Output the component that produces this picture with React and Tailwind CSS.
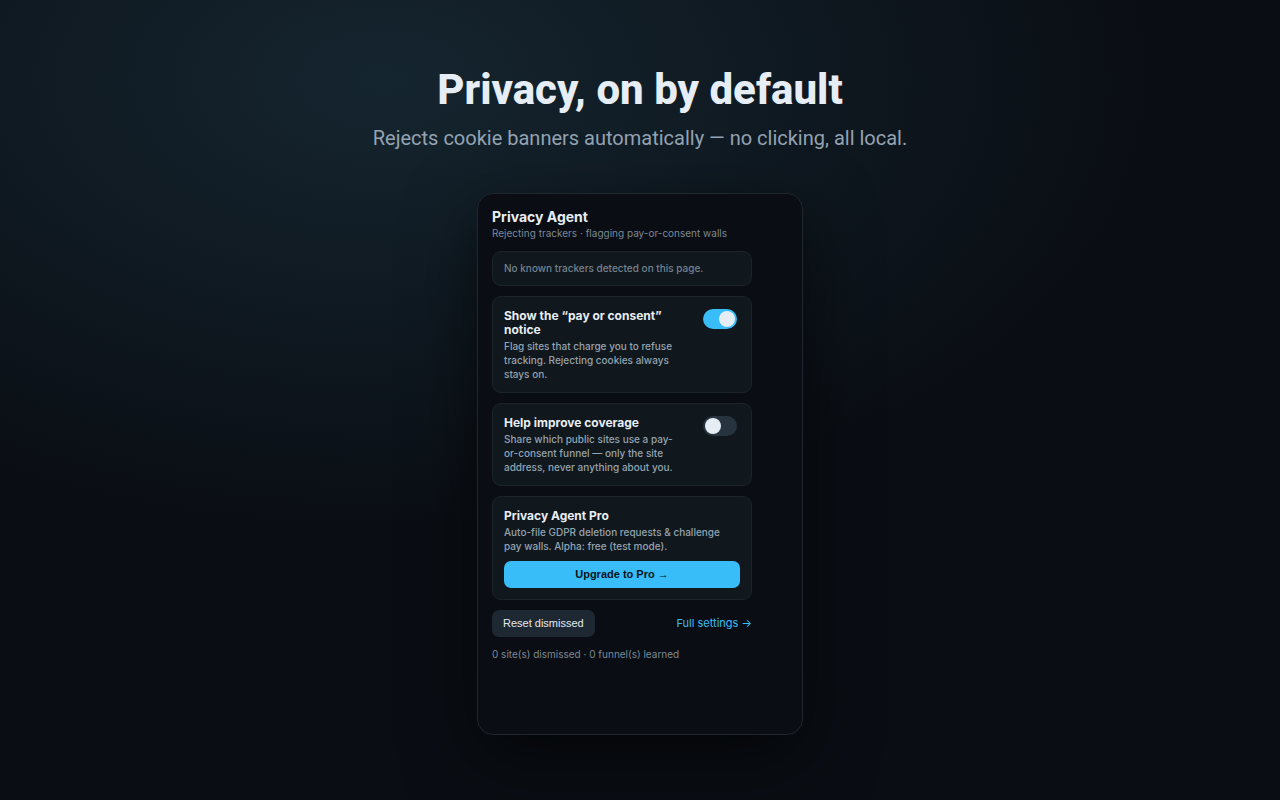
import React, { useState } from "react";

const toggles = [
  {
    id: "pay-notice",
    title: "Show the “pay or consent” notice",
    text: "Flag sites that charge you to refuse tracking. Rejecting cookies always stays on.",
    on: true,
  },
  {
    id: "coverage",
    title: "Help improve coverage",
    text: "Share which public sites use a pay-or-consent funnel — only the site address, never anything about you.",
    on: false,
  },
];

const Card = ({ children }) => (
  <div className="rounded-[9px] border border-[#1b242c] bg-[#10171d] px-[11px] pt-3 pb-[11px]">
    {children}
  </div>
);

const ToggleCard = ({ id, title, text, on }) => {
  const [checked, setChecked] = useState(on);

  return (
    <Card>
      <div className="flex items-start gap-5">
        <label htmlFor={id} className="min-w-0 flex-1 cursor-pointer">
          <span className="block text-[12px] leading-[14px] font-bold text-[#e8eef5]">
            {title}
          </span>
          <span className="mt-0.5 block text-[10px] leading-[14px] font-medium text-[#94a3b0]">
            {text}
          </span>
        </label>
        <input
          id={id}
          type="checkbox"
          checked={checked}
          onChange={(e) => setChecked(e.target.checked)}
          className="mr-[3px] flex h-5 w-[34px] shrink-0 cursor-pointer appearance-none items-center rounded-full bg-[#27333f] px-0.5 before:h-4 before:w-4 before:rounded-full before:bg-[#e6edf5] checked:justify-end checked:bg-[#38bdf8]"
        />
      </div>
    </Card>
  );
};

const Popup = () => (
  <section className="min-h-[542px] w-[326px] rounded-2xl border border-[#20272e] bg-[#0a0d13] p-3.5 shadow-[0_24px_70px_rgba(0,0,0,0.6)]">
    <div className="flex w-[260px] flex-col gap-2.5">
      <header>
        <h2 className="text-[14px] leading-[18px] font-bold text-[#e8eef5]">
          Privacy Agent
        </h2>
        <p className="text-[10px] leading-[15px] text-[#7c8995]">
          Rejecting trackers · flagging pay-or-consent walls
        </p>
      </header>

      <div className="rounded-[9px] border border-[#1b242c] bg-[#10171d] px-[11px] py-[9px]">
        <p className="text-[10px] leading-[15px] font-medium text-[#75828f]">
          No known trackers detected on this page.
        </p>
      </div>

      {toggles.map((item) => (
        <ToggleCard key={item.id} {...item} />
      ))}

      <Card>
        <h3 className="text-[12px] leading-[14px] font-bold text-[#e8eef5]">
          Privacy Agent Pro
        </h3>
        <p className="mt-0.5 text-[10px] leading-[14px] font-medium text-[#94a3b0]">
          Auto-file GDPR deletion requests &amp; challenge pay walls. Alpha:
          free (test mode).
        </p>
        <button className="mt-2 block h-[27px] w-full cursor-pointer rounded-[7px] bg-[#38bdf8] font-['Liberation_Sans',sans-serif] text-[11px] font-bold text-[#06131c]">
          Upgrade to Pro →
        </button>
      </Card>

      <div className="flex items-center justify-between">
        <button className="h-[27px] cursor-pointer rounded-[7px] bg-[#1e2832] px-[11px] font-['Liberation_Sans',sans-serif] text-[11px] text-[#e2e8f0]">
          Reset dismissed
        </button>
        <a href="#settings" className="text-[11px] leading-[15px] text-[#38bdf8]">
          Full settings →
        </a>
      </div>

      <p className="text-[10px] leading-[15px] text-[#7c8995]">
        0 site(s) dismissed · 0 funnel(s) learned
      </p>
    </div>
  </section>
);

const App = () => (
  <main className="flex min-h-screen flex-col items-center bg-[#0a0e14] bg-[radial-gradient(60%_56%_at_30%_10%,#15252f_0%,#0a0e14_100%)] px-6 pt-16 pb-16 font-['Inter',sans-serif]">
    <h1 className="text-center font-['Roboto',sans-serif] text-[42px] leading-[52px] font-extrabold text-[#e6edf5]">
      Privacy, on by default
    </h1>
    <p className="mt-2 text-center font-['Roboto',sans-serif] text-[20px] leading-7 text-[#94a3b3]">
      Rejects cookie banners automatically — no clicking, all local.
    </p>
    <div className="mt-[41px]">
      <Popup />
    </div>
  </main>
);

export default App;
